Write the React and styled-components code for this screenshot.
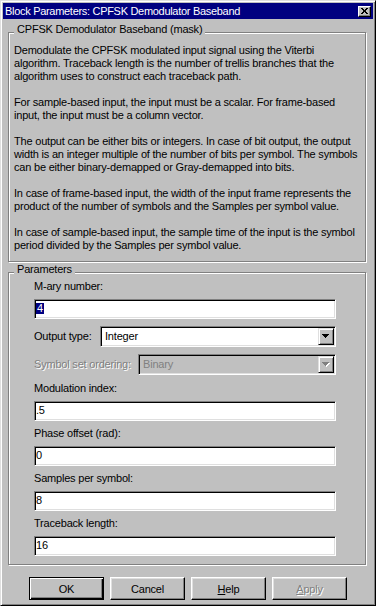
import React from "react";
import styled, { createGlobalStyle } from "styled-components";

const GlobalStyle = createGlobalStyle`
  html, body { margin: 0; padding: 0; background: #c0c0c0; }
  body {
    font-family: "Liberation Sans", Arial, sans-serif;
    font-size: 11px;
    letter-spacing: -0.2px;
    color: #000;
  }
  #root { width: 376px; height: 606px; }
`;

const Window = styled.div`
  box-sizing: border-box;
  width: 376px;
  height: 606px;
  display: flex;
  flex-direction: column;
  padding: 2px;
  background: #c0c0c0;
  border: 1px solid;
  border-color: #dfdfdf #000 #000 #dfdfdf;
  box-shadow: inset 1px 1px #fff, inset -1px -1px #808080;
`;

const TitleBar = styled.div`
  flex: none;
  height: 16px;
  display: flex;
  align-items: center;
  padding-left: 2px;
  background: #000080;
  color: #fff;
`;

const TitleText = styled.div`
  flex: 1;
  line-height: 16px;
  letter-spacing: -0.3px;
  white-space: nowrap;
`;

const CloseButton = styled.div`
  box-sizing: border-box;
  width: 13px;
  height: 11px;
  margin-right: 2px;
  display: flex;
  align-items: center;
  justify-content: center;
  background: #c0c0c0;
  border: 1px solid;
  border-color: #fff #000 #000 #fff;
  box-shadow: inset -1px -1px #808080;
`;

const Group = styled.div`
  position: relative;
  flex: none;
  box-sizing: border-box;
  margin: ${(p) => p.$top}px 7px 0 5px;
  padding: ${(p) => p.$pad};
  border: 1px solid #808080;
  box-shadow: inset 1px 1px #fff, 1px 1px #fff;
`;

const Legend = styled.div`
  position: absolute;
  top: -10px;
  left: 5px;
  padding: 0 3px;
  background: #c0c0c0;
  line-height: 13px;
  white-space: nowrap;
`;

const Para = styled.p`
  margin: 0 0 13px;
  line-height: 13px;
  white-space: nowrap;
  &:last-child { margin-bottom: 0; }
`;

const ParamList = styled.div`
  display: flex;
  flex-direction: column;
`;

const Label = styled.div`
  height: 13px;
  margin-top: ${(p) => p.$mt || 0}px;
  line-height: 13px;
  white-space: nowrap;
  color: ${(p) => (p.$disabled ? "#808080" : "#000")};
  text-shadow: ${(p) => (p.$disabled ? "1px 1px #fff" : "none")};
`;

const TextBox = styled.div`
  box-sizing: border-box;
  height: 20px;
  margin-top: ${(p) => p.$mt || 0}px;
  padding-left: 1px;
  line-height: 16px;
  white-space: nowrap;
  background: #fff;
  border: 1px solid;
  border-color: #808080 #fff #fff #808080;
  box-shadow: inset 1px 1px #000, inset -1px -1px #dfdfdf;
`;

const Selected = styled.span`
  display: inline-block;
  padding: 0 1px;
  line-height: 11px;
  background: #000080;
  color: #fff;
`;

const SelectRow = styled.div`
  display: flex;
  align-items: center;
  height: 21px;
  margin-top: ${(p) => p.$mt || 0}px;
`;

const RowLabel = styled(Label)`
  flex: none;
  width: ${(p) => p.$w}px;
  margin-top: 0;
`;

const Select = styled.div`
  flex: 1;
  box-sizing: border-box;
  height: 21px;
  display: flex;
  background: ${(p) => (p.$disabled ? "#c0c0c0" : "#fff")};
  border: 1px solid;
  border-color: #808080 #fff #fff #808080;
  box-shadow: inset 1px 1px #000, inset -1px -1px #dfdfdf;
  padding: 1px;
`;

const SelectText = styled.div`
  flex: 1;
  padding-left: 3px;
  line-height: 17px;
  white-space: nowrap;
  color: ${(p) => (p.$disabled ? "#808080" : "#000")};
`;

const DropButton = styled.div`
  flex: none;
  box-sizing: border-box;
  width: 16px;
  display: flex;
  align-items: center;
  justify-content: center;
  background: #c0c0c0;
  border: 1px solid;
  border-color: #dfdfdf #000 #000 #dfdfdf;
  box-shadow: inset 1px 1px #fff, inset -1px -1px #808080;
`;

const ButtonRow = styled.div`
  flex: none;
  display: flex;
  justify-content: center;
  gap: 6px;
  margin-top: 12px;
`;

const Button = styled.div`
  box-sizing: border-box;
  width: 75px;
  height: 23px;
  display: flex;
  align-items: center;
  justify-content: center;
  background: #c0c0c0;
  white-space: nowrap;
  border: 1px solid;
  border-color: ${(p) => (p.$default ? "#000" : "#fff #000 #000 #fff")};
  box-shadow: ${(p) =>
    p.$default
      ? "inset 1px 1px #fff, inset -1px -1px #000, inset -2px -2px #808080"
      : "inset -1px -1px #808080, inset 1px 1px #dfdfdf"};
  color: ${(p) => (p.$disabled ? "#808080" : "#000")};
  text-shadow: ${(p) => (p.$disabled ? "1px 1px #fff" : "none")};
`;

const Arrow = ({ disabled }) => (
  <svg width="8" height="5" viewBox="0 0 8 5" shapeRendering="crispEdges">
    {disabled && (
      <path d="M1 1h7v1H1z M2 2h5v1H2z M3 3h3v1H3z M4 4h1v1H4z" fill="#fff" />
    )}
    <path
      d="M0 0h7v1H0z M1 1h5v1H1z M2 2h3v1H2z M3 3h1v1H3z"
      fill={disabled ? "#808080" : "#000"}
    />
  </svg>
);

const CloseGlyph = () => (
  <svg width="7" height="6" viewBox="0 0 7 6" shapeRendering="crispEdges">
    <path
      d="M0 0h2v1H0z M5 0h2v1H5z M1 1h2v1H1z M4 1h2v1H4z M2 2h3v2H2z M1 4h2v1H1z M4 4h2v1H4z M0 5h2v1H0z M5 5h2v1H5z"
      fill="#000"
    />
  </svg>
);

const paragraphs = [
  [
    "Demodulate the CPFSK modulated input signal using the Viterbi",
    "algorithm. Traceback length is the number of trellis branches that the",
    "algorithm uses to construct each traceback path.",
  ],
  [
    "For sample-based input, the input must be a scalar. For frame-based",
    "input, the input must be a column vector.",
  ],
  [
    "The output can be either bits or integers. In case of bit output, the output",
    "width is an integer multiple of the number of bits per symbol. The symbols",
    "can be either binary-demapped or Gray-demapped into bits.",
  ],
  [
    "In case of frame-based input, the width of the input frame represents the",
    "product of the number of symbols and the Samples per symbol value.",
  ],
  [
    "In case of sample-based input, the sample time of the input is the symbol",
    "period divided by the Samples per symbol value.",
  ],
];

const params = [
  { label: "Modulation index:", value: ".5", mt: 7 },
  { label: "Phase offset (rad):", value: "0", mt: 6 },
  { label: "Samples per symbol:", value: "8", mt: 6 },
  { label: "Traceback length:", value: "16", mt: 6 },
];

export default function App() {
  return (
    <>
      <GlobalStyle />
      <Window>
        <TitleBar>
          <TitleText>Block Parameters: CPFSK Demodulator Baseband</TitleText>
          <CloseButton>
            <CloseGlyph />
          </CloseButton>
        </TitleBar>

        <Group $top={13} $pad="11px 5px 9px 5px">
          <Legend>CPFSK Demodulator Baseband (mask)</Legend>
          {paragraphs.map((lines, i) => (
            <Para key={i}>
              {lines.map((l, j) => (
                <React.Fragment key={j}>
                  {l}
                  {j < lines.length - 1 && <br />}
                </React.Fragment>
              ))}
            </Para>
          ))}
        </Group>

        <Group $top={10} $pad="7px 29px 8px 25px">
          <Legend>Parameters</Legend>
          <ParamList>
            <Label>M-ary number:</Label>
            <TextBox $mt={6}>
              <Selected>4</Selected>
            </TextBox>
            <SelectRow $mt={7}>
              <RowLabel $w={66}>Output type:</RowLabel>
              <Select>
                <SelectText>Integer</SelectText>
                <DropButton>
                  <Arrow />
                </DropButton>
              </Select>
            </SelectRow>
            <SelectRow $mt={7}>
              <RowLabel $w={104} $disabled>
                Symbol set ordering:
              </RowLabel>
              <Select $disabled>
                <SelectText $disabled>Binary</SelectText>
                <DropButton>
                  <Arrow disabled />
                </DropButton>
              </Select>
            </SelectRow>
            {params.map((p) => (
              <React.Fragment key={p.label}>
                <Label $mt={p.mt}>{p.label}</Label>
                <TextBox $mt={6}>{p.value}</TextBox>
              </React.Fragment>
            ))}
          </ParamList>
        </Group>

        <ButtonRow>
          <Button $default>OK</Button>
          <Button>Cancel</Button>
          <Button>
            <u>H</u>elp
          </Button>
          <Button $disabled>
            <u>A</u>pply
          </Button>
        </ButtonRow>
      </Window>
    </>
  );
}
